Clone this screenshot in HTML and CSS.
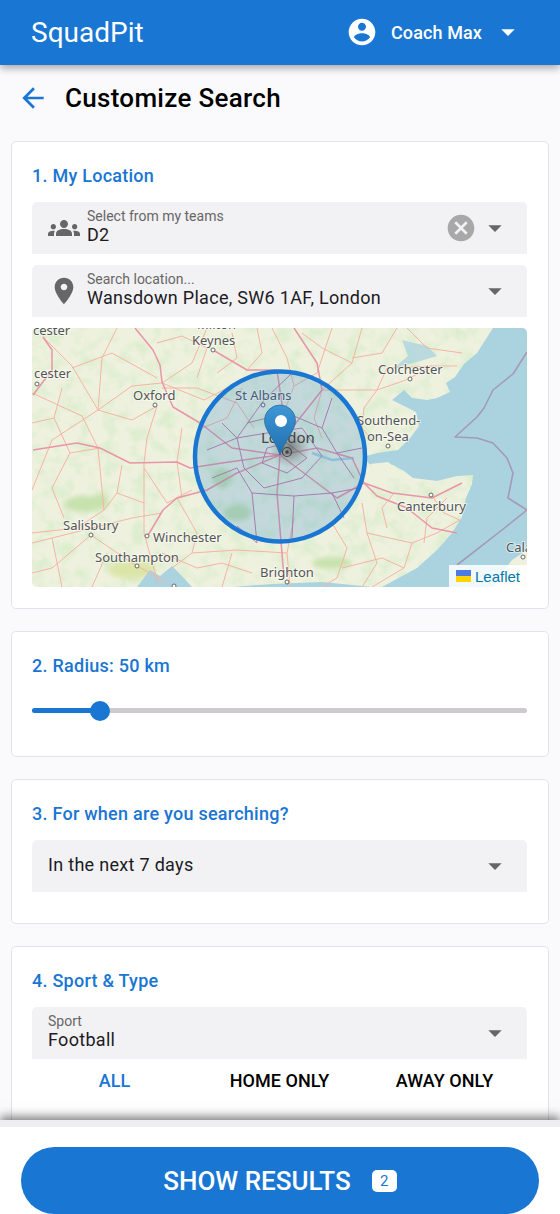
FILE: index.html
```html
<!doctype html>
<html>

<head>
  <title>SquadPit - Customize Search</title>
  <meta name="viewport" content="width=device-width, initial-scale=1.0">
  <link rel="stylesheet" href="styles.css">
</head>

<body>
  <div class="page">

    <!-- Top Bar -->
    <header class="top-bar">
      <div class="brand">SquadPit</div>
      <div class="user">
        <svg class="icon" viewBox="0 0 24 24"><path d="M12 2C6.48 2 2 6.48 2 12s4.48 10 10 10 10-4.48 10-10S17.52 2 12 2zm0 3c1.66 0 3 1.34 3 3s-1.34 3-3 3-3-1.34-3-3 1.34-3 3-3zm0 14.2c-2.5 0-4.71-1.28-6-3.22.03-1.99 4-3.08 6-3.08 1.99 0 5.97 1.09 6 3.08-1.29 1.94-3.5 3.22-6 3.22z"/></svg>
        <span class="user-name">Coach Max</span>
        <svg class="icon" viewBox="0 0 24 24"><path d="M7 10l5 5 5-5z"/></svg>
      </div>
    </header>

    <!-- Title -->
    <div class="title-row">
      <svg class="icon back-icon" viewBox="0 0 24 24"><path d="M20 11H7.83l5.59-5.59L12 4l-8 8 8 8 1.41-1.41L7.83 13H20v-2z"/></svg>
      <h1 class="page-title">Customize Search</h1>
    </div>

    <!-- Location -->
    <section class="card">
      <h2 class="card-title">1. My Location</h2>
      <div class="field">
        <svg class="icon field-icon" viewBox="0 0 24 24"><path d="M12 12.75c1.63 0 3.07.39 4.24.9 1.08.48 1.76 1.56 1.76 2.73V18H6v-1.61c0-1.18.68-2.26 1.76-2.73 1.17-.52 2.61-.91 4.24-.91zM4 13c1.1 0 2-.9 2-2s-.9-2-2-2-2 .9-2 2 .9 2 2 2zm1.13 1.1c-.37-.06-.74-.1-1.13-.1-.99 0-1.93.21-2.78.58C.48 14.9 0 15.62 0 16.43V18h4.5v-1.61c0-.83.23-1.61.63-2.29zM20 13c1.1 0 2-.9 2-2s-.9-2-2-2-2 .9-2 2 .9 2 2 2zm4 3.43c0-.81-.48-1.53-1.22-1.85-.85-.37-1.79-.58-2.78-.58-.39 0-.76.04-1.13.1.4.68.63 1.46.63 2.29V18H24v-1.57zM12 6c1.66 0 3 1.34 3 3s-1.34 3-3 3-3-1.34-3-3 1.34-3 3-3z"/></svg>
        <div class="field-text">
          <span class="field-label">Select from my teams</span>
          <span class="field-value">D2</span>
        </div>
        <svg class="icon clear-icon" viewBox="0 0 24 24"><path d="M12 2C6.47 2 2 6.47 2 12s4.47 10 10 10 10-4.47 10-10S17.53 2 12 2zm5 13.59L15.59 17 12 13.41 8.41 17 7 15.59 10.59 12 7 8.41 8.41 7 12 10.59 15.59 7 17 8.41 13.41 12 17 15.59z"/></svg>
        <svg class="icon caret" viewBox="0 0 24 24"><path d="M7 10l5 5 5-5z"/></svg>
      </div>
      <div class="field">
        <svg class="icon field-icon" viewBox="0 0 24 24"><path d="M12 2C8.13 2 5 5.13 5 9c0 5.25 7 13 7 13s7-7.75 7-13c0-3.87-3.13-7-7-7zm0 9.5c-1.38 0-2.5-1.12-2.5-2.5s1.12-2.5 2.5-2.5 2.5 1.12 2.5 2.5-1.12 2.5-2.5 2.5z"/></svg>
        <div class="field-text">
          <span class="field-label">Search location...</span>
          <span class="field-value">Wansdown Place, SW6 1AF, London</span>
        </div>
        <svg class="icon caret" viewBox="0 0 24 24"><path d="M7 10l5 5 5-5z"/></svg>
      </div>

      <div class="map">
        <svg class="map-canvas" viewBox="0 0 495 259">
          <defs>
            <radialGradient id="smog">
              <stop offset="0" stop-color="#555" stop-opacity=".7"/>
              <stop offset="1" stop-color="#777" stop-opacity="0"/>
            </radialGradient>
            <linearGradient id="pin" x1="0" y1="0" x2="0" y2="1">
              <stop offset="0" stop-color="#3f97d6"/>
              <stop offset="1" stop-color="#1f6fb0"/>
            </linearGradient>
            <filter id="soft"><feGaussianBlur stdDeviation=".55"/></filter>
            <filter id="softer"><feGaussianBlur stdDeviation="2.500"/></filter>
            <filter id="mottle" x="0" y="0" width="100%" height="100%">
              <feTurbulence type="fractalNoise" baseFrequency=".07" numOctaves="3" seed="8"/>
              <feColorMatrix values="0 0 0 0 .72  0 0 0 0 .85  0 0 0 0 .62  2.600 0 0 0 -1.050"/>
            </filter>
          </defs>

          <rect width="495" height="259" fill="#eff1df"/>
          <rect width="495" height="259" filter="url(#mottle)"/>

          <!-- woods and parks -->
          <g fill="#c8e2ad" filter="url(#softer)">
            <ellipse cx="52" cy="176" rx="20" ry="8"/>
            <ellipse cx="68" cy="174" rx="9" ry="8"/>
            <ellipse cx="100" cy="242" rx="24" ry="9" fill="#dce5a8"/>
            <ellipse cx="190" cy="150" rx="10" ry="10"/>
            <ellipse cx="205" cy="185" rx="14" ry="8"/>
            <ellipse cx="300" cy="235" rx="20" ry="6"/>
          </g>

          <!-- sea and estuary -->
          <g filter="url(#soft)">
            <path fill="#aad3df" d="M461 0L452 14 445 25 432 36 423 49 414 55 418 64 405 70 395 72 380 70 372 62 360 72 368 76 384 84 387 98 378 110 366 122 345 125 331 129 340 139 361 137 372 143 381 150 405 153 425 148 441 147 440 156 434 170 430 189 420 205 405 222 385 240 350 259 495 259 495 0z"/>
            <path fill="#eff1df" d="M495 222L480 232 470 245 462 259 495 259z"/>
            <path fill="#aad3df" d="M105 259L118 242 128 248 140 238 150 248 160 259z"/>
            <path fill="#aad3df" d="M200 259L240 256 290 254 340 259z"/>
            <path fill="#eff1df" d="M338 136L356 134 370 145 376 152 360 150 344 146z"/>
            <path fill="#aad3df" d="M370 12L395 18 405 28 385 34 362 40 376 28z" opacity=".75"/>
            <path fill="none" stroke="#aad3df" stroke-width="2.500" d="M280 125L300 132 322 130"/>
          </g>

          <!-- maritime border -->
          <g fill="none" stroke="#a49ab8" stroke-width="1.600" stroke-linejoin="round" filter="url(#soft)">
            <path d="M495 24L481 46 461 62 452 80 445 89 423 109 445 110 461 115 475 130 481 145 476 170 495 182 470 202 425 237"/>
          </g>

          <!-- minor roads -->
          <g fill="none" stroke="#f5b4a2" stroke-width="1" stroke-linejoin="round" filter="url(#soft)">
            <path d="M11 9L40 38 66 82 20 112 0 162"/>
            <path d="M85 0L70 30 66 82 100 92 125 78"/>
            <path d="M40 40L80 25 125 50"/>
            <path d="M0 65L50 88 66 120 72 182 45 200 0 205"/>
            <path d="M125 78L115 110 112 135 112 205 126 255"/>
            <path d="M66 82L100 58 130 55 172 72 205 55"/>
            <path d="M175 0L160 35 130 55"/>
            <path d="M130 60L165 60 205 75 222 100"/>
            <path d="M0 215L60 200 100 190 130 185"/>
            <path d="M59 207L20 240 0 245"/>
            <path d="M59 207L100 235 135 255"/>
            <path d="M112 140L135 175 160 162"/>
            <path d="M145 170L165 205 160 225 140 240"/>
            <path d="M160 225L205 222 255 225 258 259"/>
            <path d="M200 225L190 259"/>
            <path d="M300 0L285 45 262 58 248 95"/>
            <path d="M240 0L255 30 262 58"/>
            <path d="M330 0L320 35 290 62 345 62 374 52 400 38 425 38"/>
            <path d="M375 0L395 20 430 25"/>
            <path d="M345 62L332 80 330 100 340 112"/>
            <path d="M290 62L282 90 290 110"/>
            <path d="M300 195L315 220 305 250 290 259"/>
            <path d="M330 175L335 205 380 215 405 205 428 192"/>
            <path d="M380 215L372 240 340 259"/>
            <path d="M400 168L412 185 428 192"/>
            <path d="M335 205L345 235 330 259"/>
            <path d="M262 190L255 225"/>
            <path d="M210 60L195 90 170 100"/>
            <path d="M215 42L230 25 225 0"/>
            <path d="M30 60L22 90 38 125 20 160 32 190"/>
            <path d="M38 125L68 120"/>
            <path d="M0 95L22 90"/>
            <path d="M90 137L85 165 72 182"/>
            <path d="M85 165L112 175"/>
            <path d="M150 100L145 134 150 170"/>
            <path d="M125 15L150 8 175 20 165 50"/>
            <path d="M200 5L205 30 185 45"/>
            <path d="M20 210L30 259"/>
            <path d="M75 225L60 259"/>
            <path d="M130 225L165 240 190 235 220 245"/>
            <path d="M320 30L350 25 365 0"/>
            <path d="M345 62L355 40 400 38"/>
            <path d="M310 240L350 230 372 240"/>
            <path d="M355 200L350 180 362 165"/>
            <path d="M415 170L395 190 392 215"/>
            <path d="M270 5L290 20 320 35"/>
          </g>

          <!-- major roads -->
          <g fill="none" stroke="#ea95a6" stroke-width="1.500" stroke-linejoin="round" filter="url(#soft)">
            <path d="M103 0L121 22 128 37 130 54 141 79 168 95 200 120 248 127"/>
            <path d="M1 122L45 115 68 120 98 135 145 134 158 140 190 135 248 127"/>
            <path d="M115 209L131 182 145 170 175 162 205 145 248 127"/>
            <path d="M181 22L215 42 245 42 252 90 248 127"/>
            <path d="M11 9L20 22 20 42 1 67"/>
            <path d="M262 0L285 35 290 62 260 100 248 127"/>
            <path d="M248 127L285 120 320 130 332 155 345 168 375 180 400 200 425 205"/>
            <path d="M332 155L360 165 400 170 430 155"/>
            <path d="M248 127L245 165 252 250"/>
            <path d="M248 127L305 170 332 155"/>
          </g>

          <!-- radius circle inner roads -->
          <g fill="none" stroke="#c77fa6" stroke-width="1" stroke-linejoin="round" filter="url(#soft)">
            <path d="M175 122L205 110 232 72 260 45"/>
            <path d="M180 150L205 140 220 165 262 168 300 165 327 160"/>
            <path d="M215 95L255 85 290 100 305 125 330 120"/>
            <path d="M220 165L225 215 205 198"/>
            <path d="M262 168L260 210"/>
            <path d="M300 165L312 190"/>
            <path d="M205 110L212 140 232 160 270 150 290 128 270 100 235 105z"/>
            <path d="M230 135L255 145 275 130 255 115 235 120z"/>
            <path d="M190 95L205 110"/>
            <path d="M290 100L300 70"/>
            <path d="M305 125L322 150"/>
          </g>

          <!-- places -->
          <g class="map-dots">
            <circle cx="181" cy="22" r="2"/>
            <circle cx="5" cy="56" r="2"/>
            <circle cx="123" cy="77" r="2"/>
            <circle cx="231" cy="77" r="2"/>
            <circle cx="378" cy="51" r="2"/>
            <circle cx="356" cy="118" r="2"/>
            <circle cx="399" cy="167" r="2"/>
            <circle cx="59" cy="207" r="2"/>
            <circle cx="115" cy="208" r="2"/>
            <circle cx="105" cy="238" r="2"/>
            <circle cx="255" cy="254" r="2"/>
            <circle cx="491" cy="229" r="2"/>
            <circle cx="142" cy="258" r="2"/>
          </g>
          <g class="map-labels">
            <text x="165" y="1">Milton</text>
            <text x="160" y="17">Keynes</text>
            <text x="1" y="7">cester</text>
            <text x="2" y="50">cester</text>
            <text x="101" y="72">Oxford</text>
            <text x="203" y="72">St Albans</text>
            <text x="31" y="202">Salisbury</text>
            <text x="121" y="214">Winchester</text>
            <text x="63" y="234">Southampton</text>
            <text x="228" y="249">Brighton</text>
            <text x="346" y="46">Colchester</text>
            <text x="325" y="97">Southend-</text>
            <text x="335" y="113">on-Sea</text>
            <text x="365" y="183">Canterbury</text>
            <text x="474" y="224">Cala</text>
          </g>

          <!-- radius -->
          <circle cx="248" cy="128.500" r="85" fill="#1976d2" fill-opacity=".2" stroke="#1976d2" stroke-width="4.500"/>
          <circle cx="258" cy="120" r="20" fill="url(#smog)"/>
          <text class="map-city" x="229" y="115">London</text>
          <circle cx="255" cy="124" r="4.500" fill="none" stroke="#444" stroke-width="1.200"/>
          <circle cx="255" cy="124" r="1.800" fill="#444"/>

          <!-- marker -->
          <path d="M248 127C244 113 232.500 103 232.500 92.500A15.500 15.500 0 0 1 263.500 92.500C263.500 103 252 113 248 127z" fill="url(#pin)" stroke="#2a6ea6" stroke-width=".8"/>
          <circle cx="249" cy="93" r="6" fill="#fff"/>
        </svg>
        <div class="attribution">
          <svg class="flag" viewBox="0 0 15 12"><rect width="15" height="6" fill="#4c7be1"/><rect y="6" width="15" height="6" fill="#ffd500"/></svg>
          <span>Leaflet</span>
        </div>
      </div>
    </section>

    <!-- Radius -->
    <section class="card">
      <h2 class="card-title">2. Radius: 50 km</h2>
      <div class="slider">
        <div class="slider-fill"></div>
        <div class="slider-thumb"></div>
      </div>
    </section>

    <!-- When -->
    <section class="card card-when">
      <h2 class="card-title">3. For when are you searching?</h2>
      <div class="field">
        <div class="field-text">
          <span class="field-value">In the next 7 days</span>
        </div>
        <svg class="icon caret" viewBox="0 0 24 24"><path d="M7 10l5 5 5-5z"/></svg>
      </div>
    </section>

    <!-- Sport -->
    <section class="card">
      <h2 class="card-title">4. Sport &amp; Type</h2>
      <div class="field">
        <div class="field-text">
          <span class="field-label">Sport</span>
          <span class="field-value">Football</span>
        </div>
        <svg class="icon caret" viewBox="0 0 24 24"><path d="M7 10l5 5 5-5z"/></svg>
      </div>
      <div class="tabs">
        <div class="tab active">ALL</div>
        <div class="tab">HOME ONLY</div>
        <div class="tab">AWAY ONLY</div>
      </div>
    </section>

    <!-- Bottom Button -->
    <div class="bottom-bar">
      <button class="show-button">
        <span>SHOW RESULTS</span>
        <span class="badge">2</span>
      </button>
    </div>
  </div>
</body>

</html>
```

FILE: styles.css
```css
* {
  box-sizing: border-box;
}

html,
body {
  margin: 0;
  padding: 0;
}

body {
  background-color: #faf9fc;
  font-family: Roboto, sans-serif;
  color: #1c1b1f;
}

.page {
  position: relative;
  width: 560px;
  height: 1214px;
  overflow: hidden;
}

.icon {
  display: block;
  flex: none;
  width: 32px;
  height: 32px;
  fill: currentColor;
}

.top-bar {
  position: relative;
  z-index: 2;
  display: flex;
  align-items: center;
  justify-content: space-between;
  height: 65px;
  padding: 0 36px 0 31px;
  background-color: #1976d2;
  color: #fff;
  box-shadow: 0 3px 8px rgba(0, 0, 0, 0.35);
}

.brand {
  font-size: 28px;
  line-height: 64px;
}

.user {
  display: flex;
  align-items: center;
  margin-top: -1px;
}

.user-name {
  margin: 0 -4px 0 13px;
  width: 105px;
  font-size: 18px;
  font-weight: 500;
  letter-spacing: 0.1px;
}

.title-row {
  display: flex;
  align-items: center;
  height: 66px;
  padding-left: 17px;
}

.back-icon {
  color: #1976d2;
}

.page-title {
  margin: 0 0 0 16px;
  font-size: 26px;
  font-weight: 500;
  letter-spacing: 0.3px;
  color: #000;
}

.card {
  margin: 10px 11px 22px;
  padding: 20px 21px 21px 20px;
  background-color: #fff;
  border: 1px solid #e4e2e8;
  border-radius: 5px;
}

.card + .card {
  margin-top: 0;
}

.card-when {
  padding-bottom: 20px;
}

.card-title {
  margin: 0 0 12px;
  height: 28px;
  font-size: 18px;
  line-height: 28px;
  font-weight: 500;
  letter-spacing: 0.25px;
  color: #1976d2;
}

.field {
  display: flex;
  align-items: center;
  height: 52px;
  padding: 0 16px;
  margin-bottom: 11px;
  background-color: #f2f1f4;
  border-radius: 5px 5px 0 0;
}

.field-icon {
  margin-right: 7px;
  color: #666;
}

.field-text {
  display: flex;
  flex-direction: column;
  flex: 1;
  margin-top: -4px;
}

.field-label {
  font-size: 14px;
  line-height: 16px;
  color: #666;
}

.field-value {
  font-size: 18px;
  line-height: 21px;
  letter-spacing: 0.3px;
  color: #1c1b1f;
}

.clear-icon {
  margin-right: 2px;
  color: #a8a8a8;
}

.caret {
  color: #666;
}

.map {
  position: relative;
  height: 259px;
  border-radius: 5px;
  overflow: hidden;
}

.map-canvas {
  display: block;
  width: 100%;
  height: 100%;
}

.map-dots circle {
  fill: #fff;
  stroke: #666;
  stroke-width: 1;
}

.map-labels text {
  font-family: "Noto Sans", sans-serif;
  font-size: 13px;
  fill: #555;
  stroke: #fff;
  stroke-width: 2px;
  stroke-opacity: 0.55;
  paint-order: stroke;
}

.map-city {
  font-family: "Noto Sans", sans-serif;
  font-size: 15px;
  fill: #444;
}

.attribution {
  position: absolute;
  right: 0;
  bottom: 0;
  display: flex;
  align-items: center;
  gap: 4px;
  height: 22px;
  padding: 0 7px 0 7px;
  background-color: rgba(255, 255, 255, 0.85);
  font-family: "Liberation Sans", sans-serif;
  font-size: 15px;
  color: #0078a8;
}

.flag {
  display: block;
  width: 15px;
  height: 12px;
}

.slider {
  position: relative;
  height: 5px;
  margin: 28px 0 22px;
  background-color: #cccacd;
  border-radius: 3px;
}

.slider-fill {
  width: 68px;
  height: 5px;
  background-color: #1976d2;
  border-radius: 3px;
}

.slider-thumb {
  position: absolute;
  left: 58px;
  top: -7.500px;
  width: 20px;
  height: 20px;
  background-color: #1976d2;
  border-radius: 50%;
}

.tabs {
  display: grid;
  grid-template-columns: repeat(3, 1fr);
  margin-top: -11px;
  text-align: center;
}

.tab {
  height: 44px;
  font-size: 18px;
  line-height: 44px;
  font-weight: 500;
  letter-spacing: 0.05px;
  color: #000;
}

.tab.active {
  color: #1976d2;
}

.bottom-bar {
  position: absolute;
  left: 0;
  right: 0;
  top: 1120px;
  bottom: 0;
  z-index: 3;
  padding: 20px 21px 0;
  background-color: #fff;
  border-top: 7px solid #eeedf0;
  box-shadow: 0 -3px 10px rgba(0, 0, 0, 0.55);
}

.show-button {
  display: flex;
  align-items: center;
  justify-content: center;
  gap: 21px;
  width: 100%;
  height: 67px;
  padding: 0;
  border: none;
  border-radius: 34px;
  background-color: #1976d2;
  color: #fff;
  font-family: Roboto, sans-serif;
  font-size: 26px;
  font-weight: 500;
}

.badge {
  width: 25px;
  height: 22px;
  background-color: #fff;
  border-radius: 5px;
  color: #1976d2;
  font-size: 15px;
  font-weight: 400;
  line-height: 22px;
  text-align: center;
}
```
